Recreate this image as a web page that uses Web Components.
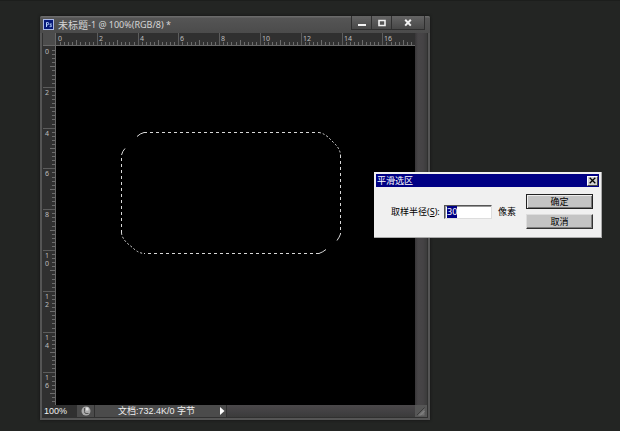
<!DOCTYPE html>
<html lang="zh-CN">
<head>
<meta charset="utf-8">
<title>未标题-1</title>
<style>
html,body{margin:0;height:100%}
body{background:#232523;font-family:"Noto Sans","Noto Sans CJK SC",sans-serif;overflow:hidden}
</style>
</head>
<body>
<work-space>
  <document-window name="未标题" detail="-1 @ 100%(RGB/8) *"><marquee-selection></marquee-selection></document-window>
  <smooth-dialog heading="平滑选区"></smooth-dialog>
</work-space>
<script>
const define=(name,html,setup)=>customElements.define(name,class extends HTMLElement{
  connectedCallback(){
    if(this.shadowRoot)return;
    const root=this.attachShadow({mode:'open'});
    root.innerHTML=html;
    if(setup)setup(this,root);
  }
});

define('work-space',`<style>
:host{display:block;position:relative;min-height:100%;background:linear-gradient(#1c1e1c 0 1px,#232523 1px)}
::slotted(document-window){position:absolute;inset:16px 190px 11px 40px}
::slotted(smooth-dialog){position:absolute;right:18px;top:172px}
</style><slot></slot>`);

define('title-bar',`<style>
:host{display:flex;justify-content:space-between;height:17px;background:linear-gradient(#6a6a6a 0 1px,#555 2px,#4b4b4b);color:#d6d6d6;font-size:9px;line-height:18px}
.name{display:flex;align-items:center;padding-left:3px;white-space:nowrap}
.name svg{width:11px;height:11px;margin-right:4px}
::slotted(b){font-size:10px;font-weight:400}
.controls{display:flex;height:14px;margin-right:5px;border:1px solid #2e2e2e;border-top:0;box-sizing:border-box}
button{all:unset;box-sizing:border-box;width:20px;height:13px;display:grid;place-items:center;background:linear-gradient(#646464,#484848);border-right:1px solid #303030}
button:last-child{width:32px;border:0}
button svg{width:10px;height:9px;display:block}
</style>
<div class="name"><svg viewBox="0 0 11 11" aria-hidden="true"><rect x=".5" y=".5" width="10" height="10" fill="#07197a" stroke="#a9b8e6"/><path d="M3.5 8V3.5H4.5Q5.7 3.5 5.7 4.6T4.5 5.8H3.5M8.8 5H7.6Q6.7 5 7.1 5.8L8.4 6.6Q8.8 7.6 7.7 7.6H6.6" fill="none" stroke="#b9d5ff"/></svg><slot></slot></div>
<div class="controls">
<button aria-label="最小化"><svg viewBox="0 0 10 9"><path d="M1 6h8v2H1z" fill="#f2f2f2"/></svg></button>
<button aria-label="最大化"><svg viewBox="0 0 10 9"><path d="M2 2.5h6v5H2z" fill="none" stroke="#f2f2f2" stroke-width="1.6"/></svg></button>
<button aria-label="关闭"><svg viewBox="0 0 10 9"><path d="M2.2 1.8 7.8 7.6M7.8 1.8 2.2 7.6" stroke="#f2f2f2" stroke-width="2"/></svg></button>
</div>`);

define('tick-ruler',`<style>
:host{display:block;overflow:hidden;background:#303030;min-width:0;min-height:0;contain:size}
svg{display:block}
text{font-size:7px;fill:#bdbdbd}
</style><svg aria-hidden="true"></svg>`,(el,root)=>{
  const vertical=el.hasAttribute('vertical'),svg=root.querySelector('svg'),step=40.8;
  const draw=()=>{
    const length=vertical?el.clientHeight:el.clientWidth;
    svg.setAttribute('width',vertical?13:length);
    svg.setAttribute('height',vertical?length:13);
    let marks='',majors='',labels='';
    for(let i=0;i*step/10<length;i++){
      const p=Math.round(i*step/10)+.5,major=i%10===0,size=major?13:i%5===0?5:3;
      const d=vertical?`M${12-size} ${p}H12`:`M${p} ${12-size}V12`;
      if(major&&i)majors+=d;else if(!major)marks+=d;
      const label=String(i/5);
      if(major&&p+(vertical?label.length*8:label.length*5+3)<length){
        if(vertical)[...label].forEach((c,k)=>{labels+=`<text x="2" y="${p+7.5+k*8}">${c}</text>`});
        else labels+=`<text x="${p+1.5}" y="8">${label}</text>`;
      }
    }
    const edge=vertical?`M12.5 0V${length}`:`M0 12.5H${length}`;
    svg.innerHTML=`<path d="${marks}" stroke="#6c6c6c"/><path d="${majors}" stroke="#5c5c5c"/><path d="${edge}" stroke="#686868"/>${labels}`;
  };
  new ResizeObserver(draw).observe(el);
});

define('marquee-selection',`<style>
:host{display:block;padding:86px 0 0 65px}
svg{display:block}
path{fill:none;stroke:#d8d8d8;stroke-width:1;stroke-dasharray:3 3}
.sparse{stroke-dasharray:2 2}
.solid{stroke-dasharray:none}
</style><svg width="221" height="123" viewBox="0 0 221 123" aria-label="选区">
<path d="M23 .5H198M219.500 23V102M198 121.500H23M.5 101V23"/>
<path class="sparse" d="M198 .5Q202 1 207 5L214 12Q219 17 219.500 23M.5 101Q1 106 6 111L12 116Q17 121 23 121.500"/>
<path class="solid" d="M16 4.500Q19 1.500 23 .5M4 16.500Q1.500 19 .5 23M219.500 102Q218.500 105 216 108.500M205 117.500Q202 120 198 121.500"/>
</svg>`);

define('status-bar',`<style>
:host{display:flex;height:12px;background:#434143;color:#f0f0f0;font-family:"Liberation Sans","Noto Sans CJK SC",sans-serif;font-size:9px;line-height:12px}
.zoom{width:34px;box-sizing:border-box;padding-left:1px;background:#303030}
button{all:unset;display:grid;place-items:center;height:12px;width:17px;background:#4b4b4b;border-right:1px solid #303030}
.info{width:123px;text-align:center;background:#4b4b4b;white-space:nowrap}
.menu{width:8px;border:0;border-right:1px solid #303030}
.scroll{flex:1;background:linear-gradient(#4b484a,#414042 60%,#3b3b3b)}
.grip{width:12px;background:#565656}
svg{display:block}
</style>
<span class="zoom">100%</span>
<button aria-label="状态"><svg width="10" height="10" viewBox="0 0 10 10"><circle cx="5" cy="5" r="4.500" fill="#aaa"/><path d="M3.500 2V5.500Q3.500 7.500 5 7.500H7.500" fill="none" stroke="#555"/><path d="M5 1.500h2.500v3h-2.500z" fill="#e2e2e2"/></svg></button>
<span class="info">文档:732.4K/0 字节</span>
<button class="menu" aria-label="状态菜单"><svg width="6" height="8"><path d="M1 0 5.500 4 1 8z" fill="#fff"/></svg></button>
<span class="scroll"></span>
<span class="grip"><svg width="12" height="12"><path d="M2.500 10.500H9.500V3.500Z" fill="#707070"/><path d="M2 10 9.500 2.500" stroke="#3a3a3a"/><path d="M5 10.500 9.500 6" stroke="#8a8a8a"/></svg></span>`);

define('document-window',`<style>
:host{display:flex;flex-direction:column;box-sizing:border-box;border-radius:2px 2px 0 0;overflow:hidden;background:#555;box-shadow:0 0 3px #111}
.frame{flex:1;display:flex;flex-direction:column;min-height:0;margin:0 2px 2px;border:solid #303030;border-width:0 1px 1px}
.view{flex:1;display:grid;grid-template:13px minmax(0,1fr) / 13px minmax(0,1fr) 12px;min-height:0}
.corner{background:#4c4c4c;border:solid #686868;border-width:0 1px 1px 0}
.canvas{background:#000;overflow:hidden}
.scroll{grid-column:3;grid-row:1 / 3;background:linear-gradient(90deg,#383638,#474547 3px,#454345 8px,#3b3b3b)}
.vertical{grid-column:1}
</style>
<title-bar></title-bar>
<div class="frame"><div class="view"><div class="corner"></div><tick-ruler></tick-ruler><div class="scroll"></div><tick-ruler class="vertical" vertical></tick-ruler><div class="canvas"><slot></slot></div></div><status-bar></status-bar></div>`,
(el,root)=>{
  const name=document.createElement('b');
  name.textContent=el.getAttribute('name');
  root.querySelector('title-bar').append(name,el.getAttribute('detail'));
});

define('dialog-button',`<style>
:host{display:block}
button{display:block;box-sizing:border-box;width:100%;height:15px;padding:0;border:1px solid;border-color:#ddd #333 #333 #ddd;border-radius:0;background:#c4c4c4;box-shadow:inset -1px -1px #808080;font:inherit;line-height:13px;color:#000;text-align:center}
:host([primary]) button{border-color:#222;box-shadow:inset 1px 1px #eee,inset -1px -1px #777}
</style><button type="button"><slot></slot></button>`);

define('smooth-dialog',`<style>
:host{display:block;box-sizing:border-box;width:228px;padding:2px;background:#f0f0f0;border:solid;border-width:0 1px 1px 0;border-color:#aaa;color:#000;font-size:9px}
header{display:flex;justify-content:space-between;align-items:center;height:13px;padding:0 1px;background:#000084;color:#fff;line-height:13px}
.close{all:unset;display:grid;place-items:center;box-sizing:border-box;width:11px;height:10px;background:#d0d0d0;border:1px solid;border-color:#fff #444 #444 #fff}
.body{display:flex;justify-content:space-between;padding:7px 6px 6px 15px}
.field{display:flex;align-items:center;height:35px;line-height:13px;white-space:nowrap}
label{width:53px}
input{box-sizing:border-box;width:48px;height:14px;margin:0 6px 0 0;padding:0 2px;border:1px solid;border-color:#555 #ddd #ddd #555;box-shadow:inset 1px 1px #999;background:#fff;font:inherit;color:#000;outline:0}
input::selection{background:#000084;color:#fff}
.actions{display:flex;flex-direction:column;gap:5px;width:67px}
</style>
<header><span class="name"></span><button class="close" aria-label="关闭"><svg width="7" height="7" viewBox="0 0 7 7"><path d="M.7.7 6.300 6.300M6.300.7.7 6.300" stroke="#000" stroke-width="1.300"/></svg></button></header>
<div class="body"><div class="field"><label for="radius">取样半径(<u>S</u>):</label><input id="radius" value="30"><span>像素</span></div>
<div class="actions"><dialog-button primary>确定</dialog-button><dialog-button>取消</dialog-button></div></div>`,
(el,root)=>{
  root.querySelector('.name').textContent=el.getAttribute('heading');
  const input=root.querySelector('input');
  input.focus();
  input.select();
});
</script>
</body>
</html>
